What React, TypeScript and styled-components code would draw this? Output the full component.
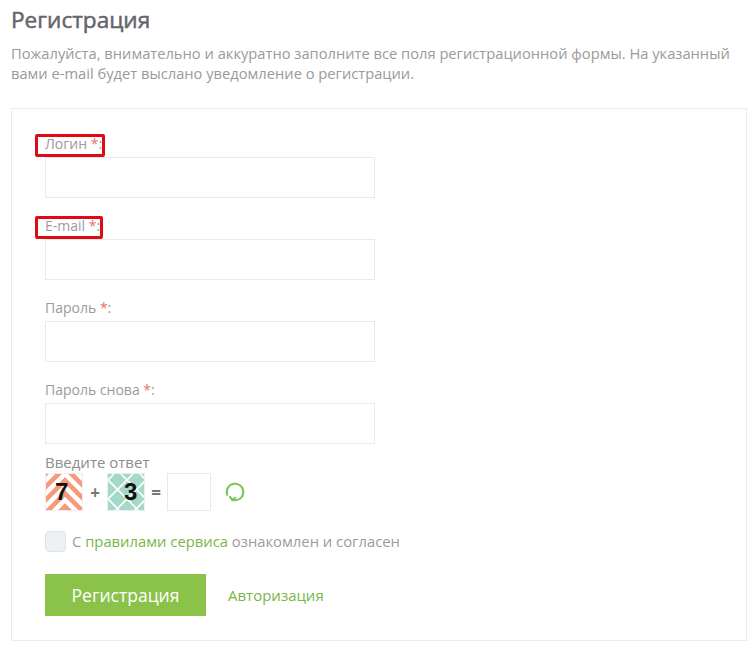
import React from "react";
import styled, { createGlobalStyle } from "styled-components";

const Global = createGlobalStyle`
  html, body { margin: 0; padding: 0; background: #fff; }
  body { font-family: "Open Sans", "Noto Sans", sans-serif; }
  * { box-sizing: border-box; }
`;

const Page = styled.div`
  padding: 5px 6px 0 11px;
  width: 753px;
`;

const Title = styled.h1`
  margin: 0;
  font-size: 22.6px;
  line-height: 30px;
  font-weight: 400;
  color: #65656c;
  -webkit-text-stroke: 0.5px #65656c;
`;

const Intro = styled.p`
  margin: 8px 0 25px;
  font-size: 14.7px;
  line-height: 20px;
  color: #9a9a9a;
`;

const Panel = styled.form`
  border: 1px solid #ebebeb;
  padding: 25px 33px 24px 33px;
`;

const Field = styled.div`
  display: flex;
  flex-direction: column;
  align-items: flex-start;
  margin-bottom: 18px;
`;

const LabelWrap = styled.div`
  position: relative;
  font-size: 14px;
  line-height: 20px;
  color: #9b9b9b;
  margin-bottom: 3px;
`;

const Highlight = styled.span`
  position: absolute;
  left: -10px;
  top: 0;
  bottom: -3px;
  right: -3px;
  border: 3px solid #e00a14;
  border-radius: 2px;
  pointer-events: none;
`;

const Star = styled.span`
  color: #ea6f6f;
`;

const TextInput = styled.input`
  display: block;
  width: 330px;
  height: 41px;
  border: 1px solid #e9e9e9;
  background: #fff;
  outline: none;
`;

const CaptchaLabel = styled.div`
  font-size: 15px;
  line-height: 20px;
  color: #8d8d8d;
  margin-top: -10px;
  margin-bottom: 1px;
`;

const CaptchaRow = styled.div`
  display: flex;
  align-items: center;
  height: 38px;
`;

const Tile = styled.div<{ $pad: number }>`
  position: relative;
  width: 38px;
  height: 38px;
  border: 1px solid #eee;
  display: flex;
  align-items: center;
  padding-left: ${(p) => p.$pad}px;
  overflow: hidden;
`;

const TileBg = styled.svg`
  position: absolute;
  left: 0;
  top: 0;
`;

const Digit = styled.span`
  position: relative;
  font-family: "Liberation Sans", Arial, sans-serif;
  font-weight: 700;
  font-size: 24px;
  line-height: 1;
  color: #111;
`;

const Op = styled.span<{ $w: number }>`
  font-size: 17px;
  color: #777;
  width: ${(p) => p.$w}px;
  text-align: center;
  font-weight: 700;
`;

const AnswerInput = styled.input`
  width: 44px;
  height: 38px;
  border: 1px solid #e9e9e9;
  outline: none;
`;

const Refresh = styled.button`
  border: 0;
  background: none;
  padding: 0;
  margin-left: 12px;
  display: flex;
  cursor: pointer;
`;

const AgreeRow = styled.label`
  display: flex;
  align-items: center;
  margin-top: 20px;
  font-size: 14.8px;
  line-height: 21px;
  color: #9b9b9b;
`;

const Box = styled.span`
  width: 21px;
  height: 21px;
  border: 1px solid #dfe3e6;
  background: #eef1f3;
  border-radius: 4px;
  margin-right: 6px;
`;

const Link = styled.a`
  color: #7ab648;
  text-decoration: none;
`;

const Actions = styled.div`
  display: flex;
  align-items: center;
  margin-top: 22px;
`;

const Submit = styled.button`
  width: 161px;
  height: 42px;
  border: 0;
  background: #8bc34a;
  color: #fff;
  font-family: "Open Sans", sans-serif;
  font-size: 17.5px;
  font-weight: 400;
  cursor: pointer;
`;

const AuthLink = styled.a`
  margin-left: 22px;
  font-size: 15px;
  color: #7ab648;
  text-decoration: none;
`;

const Chevrons = () => (
  <TileBg width="38" height="38" viewBox="0 0 38 38">
    <rect width="38" height="38" fill="#f79a7b" />
    {[-2, -1, 0, 1, 2, 3].map((k) => (
      <polyline
        key={k}
        points={`-2,${k * 13 + 21} 19,${k * 13} 40,${k * 13 + 21}`}
        fill="none"
        stroke="#fff"
        strokeWidth="4.5"
      />
    ))}
  </TileBg>
);

const Lattice = () => (
  <TileBg width="38" height="38" viewBox="0 0 38 38">
    <rect width="38" height="38" fill="#a3d9c6" />
    {[-38, -19, 0, 19, 38, 57].map((o) => (
      <g key={o} stroke="#fff" strokeWidth="1.6">
        <line x1={o - 6} y1={0} x2={o + 32} y2={38} />
        <line x1={o + 6} y1={0} x2={o - 32} y2={38} />
      </g>
    ))}
  </TileBg>
);

const Label = ({ text, mark }: { text: string; mark?: boolean }) => (
  <LabelWrap>
    {text} <Star>*</Star>:{mark && <Highlight />}
  </LabelWrap>
);

export default function App() {
  return (
    <Page>
      <Global />
      <Title>Регистрация</Title>
      <Intro>
        Пожалуйста, внимательно и аккуратно заполните все поля регистрационной формы. На указанный
        вами e-mail будет выслано уведомление о регистрации.
      </Intro>
      <Panel onSubmit={(e) => e.preventDefault()}>
        <Field>
          <Label text="Логин" mark />
          <TextInput type="text" />
        </Field>
        <Field>
          <Label text="E-mail" mark />
          <TextInput type="text" />
        </Field>
        <Field>
          <Label text="Пароль" />
          <TextInput type="password" />
        </Field>
        <Field>
          <Label text="Пароль снова" />
          <TextInput type="password" />
        </Field>
        <CaptchaLabel>Введите ответ</CaptchaLabel>
        <CaptchaRow>
          <Tile $pad={9}>
            <Chevrons />
            <Digit>7</Digit>
          </Tile>
          <Op $w={24}>+</Op>
          <Tile $pad={16}>
            <Lattice />
            <Digit>3</Digit>
          </Tile>
          <Op $w={22}>=</Op>
          <AnswerInput type="text" />
          <Refresh type="button" aria-label="Обновить">
            <svg width="24" height="24" viewBox="0 0 24 24" fill="none" stroke="#7cc35a" strokeWidth="2" strokeLinecap="round" strokeLinejoin="round">
              <path d="M4.3 14.9 A8.3 8.3 0 1 1 9.3 19.8" />
              <path d="M7 16.8 L9.3 19.9 L12.3 17.8" />
            </svg>
          </Refresh>
        </CaptchaRow>
        <AgreeRow>
          <Box />
          С&nbsp;<Link href="#">правилами сервиса</Link>&nbsp;ознакомлен и согласен
        </AgreeRow>
        <Actions>
          <Submit type="submit">Регистрация</Submit>
          <AuthLink href="#">Авторизация</AuthLink>
        </Actions>
      </Panel>
    </Page>
  );
}
